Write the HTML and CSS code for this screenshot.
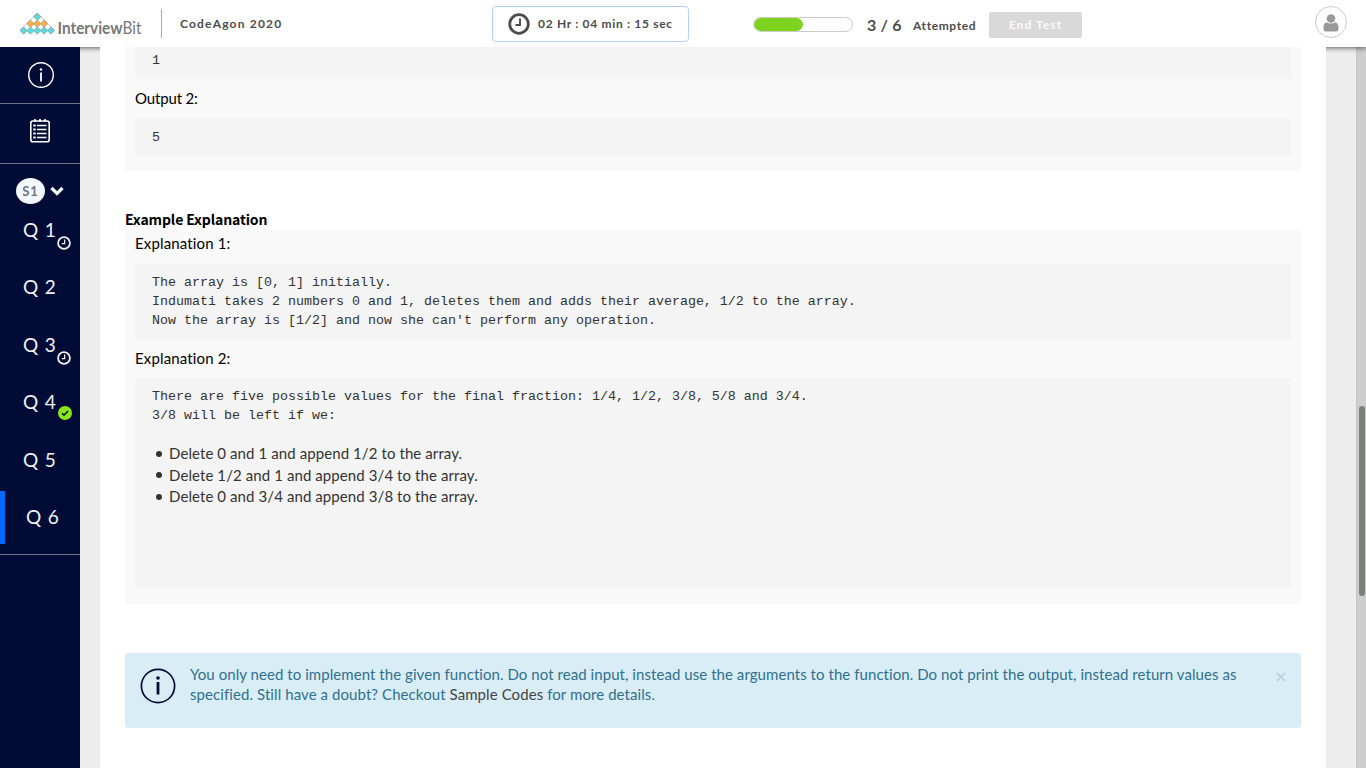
FILE: index.html
```html
<!DOCTYPE html>
<html lang="en">
<head>
<meta charset="utf-8">
<title>CodeAgon 2020</title>
<link rel="stylesheet" href="styles.css">
</head>
<body>
<svg width="0" height="0" class="defs">
  <defs>
    <path id="tile" d="M0-3.6 3.6 0 0 3.6-3.6 0Z"/>
    <symbol id="clock" viewBox="0 0 22 22"><circle cx="11" cy="11" r="9.3" fill="none" stroke="currentColor" stroke-width="2.8"/><path d="M12 5.5V12H7.5" fill="none" stroke="currentColor" stroke-width="1.9"/></symbol>
  </defs>
</svg>
<header class="topbar">
  <svg class="logo" width="124" height="26" viewBox="0 0 124 26">
    <g stroke="#8d9595" stroke-width=".7">
      <g fill="#57dde0"><use href="#tile" x="17.3" y="4.8"/><use href="#tile" x="3.6" y="18.6"/><use href="#tile" x="10.5" y="18.6"/><use href="#tile" x="17.3" y="18.6"/><use href="#tile" x="24.1" y="18.6"/><use href="#tile" x="30.9" y="18.6"/></g>
      <g fill="#ffae42"><use href="#tile" x="10.5" y="11.7"/><use href="#tile" x="17.3" y="11.7"/><use href="#tile" x="24.1" y="11.7"/></g>
      <path d="M17.3 1 34.7 18.6M17.3 1 0 18.6" fill="none" stroke-width=".6"/>
    </g>
    <text class="logo-text" x="37.5" y="21.6" textLength="84" lengthAdjust="spacingAndGlyphs"><tspan font-weight="700">Interview</tspan><tspan font-weight="400">Bit</tspan></text>
  </svg>
  <div class="test-name"><span>CodeAgon 2020</span></div>
  <div class="timer"><svg width="22" height="22"><use href="#clock"/></svg><span>02 Hr : 04 min : 15 sec</span></div>
  <div class="progress"><div class="progress-fill"></div></div>
  <div class="count">3 / 6</div>
  <div class="attempted">Attempted</div>
  <button class="end">End Test</button>
  <div class="avatar"><svg width="16" height="18" viewBox="0 0 16 18"><circle cx="8" cy="4.5" r="4.3"/><path d="M3.6 8.2Q8 11 12.4 8.2Q15.5 9 15.5 13.5V15Q15.5 17.5 13 17.5H3Q.5 17.5.5 15V13.5Q.5 9 3.6 8.2Z"/></svg></div>
</header>
<div class="page">
  <nav class="side">
    <div class="nav-info"><svg width="28" height="28" viewBox="0 0 28 28"><circle cx="14" cy="14" r="12.3" fill="none" stroke="#fff" stroke-width="1.4"/><path d="M14 11.5V20.5" stroke="#fff" stroke-width="1.8"/><circle cx="14" cy="8.5" r="1.2" fill="#fff"/></svg></div>
    <div class="nav-list"><svg width="22" height="26" viewBox="0 0 22 26"><g fill="none" stroke="#fff"><rect x="1.8" y="3" width="18.4" height="20.8" rx="2" stroke-width="1.6"/><path d="M6 1v3M11 1v3M16 1v3" stroke-width="1.6"/><path d="M8 7.5h9.5M8 11.5h9.5M8 15.5h9.5M8 19.5h9.5" stroke-width="1.5"/><path d="M4.3 7.5h2.4M4.3 11.5h2.4M4.3 15.5h2.4M4.3 19.5h2.4" stroke-width="2.2"/></g></svg></div>
    <div class="section"><span class="s1">S1</span><svg width="14" height="10" viewBox="0 0 14 10"><path d="M1.5 2 7 7.5 12.5 2" fill="none" stroke="#f3f7ff" stroke-width="3.2"/></svg></div>
    <div class="questions">
      <div class="q">Q 1<svg class="badge" width="14" height="14"><use href="#clock"/></svg></div>
      <div class="q">Q 2</div>
      <div class="q">Q 3<svg class="badge" width="14" height="14"><use href="#clock"/></svg></div>
      <div class="q">Q 4<svg class="badge done" width="14" height="14" viewBox="0 0 14 14"><circle cx="7" cy="7" r="7" fill="#88e51c"/><path d="M4 7.3 6 9.2 10 5" fill="none" stroke="#000c36" stroke-width="1.5"/></svg></div>
      <div class="q">Q 5</div>
      <div class="q active">Q 6</div>
    </div>
  </nav>
  <main class="content">
    <section class="box output">
      <pre class="first">1</pre>
      <p class="label">Output 2:</p>
      <pre>5</pre>
    </section>
    <h3>Example Explanation</h3>
    <section class="box explanation">
      <p class="label">Explanation 1:</p>
      <pre>The array is [0, 1] initially.
Indumati takes 2 numbers 0 and 1, deletes them and adds their average, 1/2 to the array.
Now the array is [1/2] and now she can't perform any operation.</pre>
      <p class="label second">Explanation 2:</p>
      <div class="code"><pre>There are five possible values for the final fraction: 1/4, 1/2, 3/8, 5/8 and 3/4.
3/8 will be left if we:</pre>
        <ul><li>Delete 0 and 1 and append 1/2 to the array.</li><li>Delete 1/2 and 1 and append 3/4 to the array.</li><li>Delete 0 and 3/4 and append 3/8 to the array.</li></ul>
      </div>
    </section>
    <aside class="notice">
      <svg width="36" height="36" viewBox="0 0 36 36"><circle cx="18" cy="18" r="16.6" fill="none" stroke="#000c36" stroke-width="1.7"/><path d="M18 14V26.5" stroke="#000c36" stroke-width="2.8"/><circle cx="18" cy="10" r="1.8" fill="#000c36"/></svg>
      <p><span class="l1">You only need to implement the given function. Do not read input, instead use the arguments to the function. Do not print the output, instead return values as</span><br><span class="l2">specified. Still have a doubt? Checkout <a>Sample Codes</a> for more details.</span></p>
      <svg class="close" width="10" height="10" viewBox="0 0 10 10"><path d="M.8.8 9.2 9.2M9.2.8.8 9.2" stroke="#b8d3df" stroke-width="1.8"/></svg>
    </aside>
  </main>
  <div class="scroll"><div class="thumb"></div></div>
</div>
</body>
</html>
```

FILE: styles.css
```css
* { box-sizing: border-box; }
body { margin: 0; height: 768px; overflow: hidden; display: flex; flex-direction: column; background: #ededed; font-family: Lato, sans-serif; color: #333; }
.defs { position: absolute; }
svg { display: block; flex: none; }
.topbar { height: 47px; flex: none; display: flex; background: #fff; box-shadow: 0 1px 5px rgba(0,0,0,.6); position: relative; font-weight: 700; color: #4c4c4c; }
.logo { margin: 12px 0 0 20px; }
.logo-text { font-family: Lato, sans-serif; font-size: 17.5px; fill: #777; }
.test-name { height: 29px; margin: 9px 0 0 17px; width: 332px; border-left: 1px solid #aaa; padding-left: 18px; font-size: 12px; line-height: 29px; letter-spacing: 1.2px; }
.timer { width: 197px; height: 36px; margin: 6px 0 0 -1px; border: 1px solid #b2d0fc; border-radius: 4px; display: flex; align-items: center; padding-left: 15px; gap: 8px; font-size: 12px; letter-spacing: .68px; white-space: nowrap; }
.timer svg { margin-top: -1px; }
.timer span { margin-top: -1px; }
.progress { width: 100px; height: 15px; margin: 17px 0 0 64px; border: 1px solid #ccc; border-radius: 8px; overflow: hidden; }
.progress-fill { width: 49px; height: 13px; border-radius: 7px; background: #7ed31f; }
.count { width: 46px; margin-left: 14px; font-size: 16px; line-height: 49px; letter-spacing: 1.1px; word-spacing: -1.8px; white-space: nowrap; }
.attempted { width: 76px; font-size: 12px; line-height: 52px; letter-spacing: .6px; }
.end { width: 93px; height: 26px; margin-top: 12px; padding: 0; border: 0; border-radius: 2px; background: #d9d9d9; color: #fafafa; font: 700 12px/26px Lato, sans-serif; letter-spacing: 1.1px; }
.avatar { width: 32px; height: 32px; margin: 6px 19px 0 auto; border: 1px solid #ccc; border-radius: 50%; display: flex; align-items: center; justify-content: center; }
.avatar svg { fill: #999; margin-top: 1px; }
.page { flex: 1; display: flex; min-height: 0; }
.side { width: 80px; flex: none; background: #000c36; color: #f1f3f8; position: relative; z-index: 1; }
.nav-info, .nav-list { display: flex; border-bottom: 1px solid #6d7387; }
.nav-info { height: 57px; padding: 14px 0 0 27px; }
.nav-list { height: 60px; padding: 14px 0 0 29px; }
.section { height: 40px; display: flex; align-items: center; gap: 5px; padding: 14px 0 0 16px; }
.s1 { width: 29px; height: 26px; border-radius: 50%; background: #f3f7ff; color: #70737b; font-size: 13px; line-height: 27px; text-align: center; letter-spacing: .9px; font-weight: 700; }
.questions { height: 351px; border-bottom: 1px solid #6d7387; }
.q { position: relative; height: 53px; margin-bottom: 4.4px; padding-left: 23px; font-size: 19px; line-height: 52px; letter-spacing: 1.4px; word-spacing: -1px; }
.badge { position: absolute; left: 57px; top: 32px; }
.done { left: 58px; top: 30px; }
.active { border-left: 5px solid #0069ff; padding-left: 21px; }
.content { width: 1226px; margin-left: 20px; background: #fff; padding: 0 25px; position: relative; z-index: 1; }
.box { background: #f9f9f9; padding: 0 10px; }
.output { height: 124px; }
.explanation { height: 374px; }
pre, .code { margin: 0; background: #f4f4f4; border-radius: 2px; }
pre { font: 13.333px/18.8px "Liberation Mono", monospace; padding: 10px 17px 9px; height: 75px; color: #333; }
.output pre { height: 37px; }
.output .first { height: 32px; padding-top: 5px; }
.label { margin: 0; height: 40px; font-size: 15px; line-height: 39px; color: #000; letter-spacing: -.15px; }
h3 { margin: 39px 0 0; height: 20px; font: 700 14px/18px "Noto Sans CJK SC", sans-serif; letter-spacing: -.12px; color: #000; }
.explanation .label { height: 34px; line-height: 27px; letter-spacing: .15px; }
.explanation .second { height: 39px; line-height: 39px; }
.code { height: 211px; }
.code pre { height: 65px; }
ul { list-style: none; margin: 0; padding: 0 17px; font-size: 15px; line-height: 21.5px; letter-spacing: .09px; }
li { display: flex; align-items: center; gap: 7px; padding-left: 4px; }
li::before { content: ""; width: 6px; height: 6px; border-radius: 50%; background: #333; }
.notice { display: flex; height: 75px; margin-top: 49px; border-radius: 3px; background: #d9edf7; padding: 14px 15px; color: #31708f; font-size: 15px; line-height: 20px; letter-spacing: .06px; }
.notice > svg:first-child { margin-top: 1px; }
.notice p { margin: -3px 0 0 14px; white-space: nowrap; flex: 1; }
.l2 { letter-spacing: .08px; }
.notice a { color: #444; }
.close { margin: 5px 0 0; }
.scroll { width: 10px; margin-left: auto; border-left: 1px solid #c7c5be; background: #cdcdcd; padding: 359px 1px 0 2px; }
.thumb { height: 190px; border-radius: 3px; background: #7b807c; }
```
